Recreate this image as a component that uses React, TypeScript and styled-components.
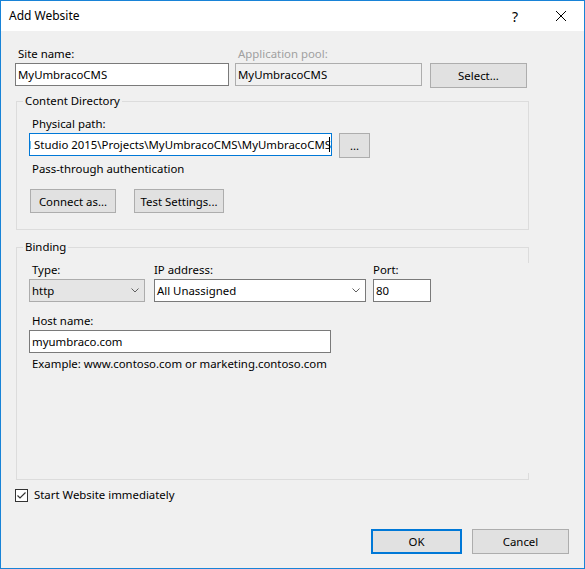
import styled, { createGlobalStyle } from 'styled-components';

const GlobalStyle = createGlobalStyle`
  html, body {
    margin: 0;
    padding: 0;
    background: #ffffff;
  }
`;

const Window = styled.div`
  width: 585px;
  height: 569px;
  box-sizing: border-box;
  border: 1px solid #1883d7;
  display: flex;
  flex-direction: column;
  font-family: 'Noto Sans', 'Open Sans', sans-serif;
  font-size: 11.4px;
  color: #000;
`;

const TitleBar = styled.div`
  height: 30px;
  flex-shrink: 0;
  background: #fff;
  display: flex;
  align-items: center;
`;

const Title = styled.div`
  flex: 1;
  padding-left: 8px;
  line-height: 16px;
  font-size: 12px;
`;

const CaptionButton = styled.div`
  width: 46px;
  height: 30px;
  display: flex;
  align-items: center;
  justify-content: center;
  font-size: 14px;
`;

const Body = styled.div`
  flex: 1;
  background: #f0f0f0;
  padding: 15px 15px 14px 14px;
  display: flex;
  flex-direction: column;
`;

const Label = styled.div<{ $disabled?: boolean; $gap?: number; $flush?: boolean }>`
  height: 16px;
  line-height: 16px;
  padding-left: ${(p) => (p.$flush ? 0 : 3)}px;
  margin-top: ${(p) => p.$gap ?? 0}px;
  margin-bottom: 1px;
  white-space: nowrap;
  color: ${(p) => (p.$disabled ? '#a0a0a0' : '#000')};
`;

const Row = styled.div<{ $gap?: number; $top?: number }>`
  display: flex;
  align-items: flex-start;
  gap: ${(p) => p.$gap ?? 0}px;
  margin-top: ${(p) => p.$top ?? 0}px;
`;

const Column = styled.div<{ $w: number; $left?: number }>`
  width: ${(p) => p.$w}px;
  margin-left: ${(p) => p.$left ?? 0}px;
  display: flex;
  flex-direction: column;
`;

const TextBox = styled.div<{ $w?: number; $disabled?: boolean; $focused?: boolean; $top?: number }>`
  width: ${(p) => (p.$w ? `${p.$w}px` : '100%')};
  height: 23px;
  margin-top: ${(p) => p.$top ?? 0}px;
  box-sizing: border-box;
  border: 1px solid ${(p) => (p.$focused ? '#0078d7' : p.$disabled ? '#adadad' : '#7a7a7a')};
  background: ${(p) => (p.$disabled ? '#f0f0f0' : '#fff')};
  padding: 0 2px;
  line-height: 21px;
  white-space: nowrap;
  overflow: hidden;
`;

const PathBox = styled(TextBox)`
  display: flex;
  justify-content: flex-end;
  align-items: center;
  padding: 0 1px 0 0;
`;

const Caret = styled.span`
  width: 1px;
  height: 15px;
  background: #000;
  margin-left: -2px;
  flex-shrink: 0;
`;

const Button = styled.button<{ $w: number; $h?: number; $default?: boolean; $left?: number }>`
  width: ${(p) => p.$w}px;
  height: ${(p) => p.$h ?? 25}px;
  margin-left: ${(p) => p.$left ?? 0}px;
  box-sizing: border-box;
  background: #e1e1e1;
  border: ${(p) => (p.$default ? '2px solid #0078d7' : '1px solid #adadad')};
  font: inherit;
  color: #000;
  padding: 0;
  flex-shrink: 0;
`;

const Combo = styled.div<{ $readonly?: boolean }>`
  height: 23px;
  box-sizing: border-box;
  border: 1px solid ${(p) => (p.$readonly ? '#acacac' : '#7a7a7a')};
  background: ${(p) => (p.$readonly ? '#e5e5e5' : '#fff')};
  display: flex;
  align-items: center;
  padding: 0 5px 0 2px;
  line-height: 21px;
`;

const ComboValue = styled.span`
  flex: 1;
`;

const Group = styled.section<{ $h: number; $top: number; $openRight?: boolean }>`
  position: relative;
  width: 513px;
  height: ${(p) => p.$h}px;
  box-sizing: border-box;
  margin: ${(p) => p.$top}px 0 0 1px;
  border: 1px solid #dcdcdc;
  border-right-color: ${(p) => (p.$openRight ? 'transparent' : '#dcdcdc')};
  padding: 14px 12px 0 12px;

  ${(p) =>
    p.$openRight &&
    `
    &::before, &::after {
      content: '';
      position: absolute;
      right: -1px;
      width: 1px;
      background: #dcdcdc;
    }
    &::before { top: -1px; height: 16px; }
    &::after { bottom: -1px; height: 7px; }
  `}
`;

const GroupTitle = styled.div`
  position: absolute;
  top: -9px;
  left: 6px;
  padding: 0 2px;
  line-height: 16px;
  background: #f0f0f0;
`;

const CheckRow = styled.label`
  display: flex;
  align-items: center;
  gap: 6px;
  height: 16px;
  margin-top: 7px;
  line-height: 16px;
`;

const CheckBox = styled.span`
  width: 13px;
  height: 13px;
  box-sizing: border-box;
  border: 1px solid #333;
  background: #fff;
  display: flex;
  align-items: center;
  justify-content: center;
`;

const Footer = styled.div`
  margin-top: auto;
  display: flex;
  justify-content: flex-end;
  gap: 10px;
`;

const Chevron = () => (
  <svg width="8" height="5" viewBox="0 0 8 5">
    <path d="M0.5 0.5 L4 4 L7.5 0.5" fill="none" stroke="#606060" strokeWidth="1" />
  </svg>
);

export default function App() {
  return (
    <>
      <GlobalStyle />
      <Window>
        <TitleBar>
          <Title>Add Website</Title>
          <CaptionButton>?</CaptionButton>
          <CaptionButton>
            <svg width="10" height="10" viewBox="0 0 10 10">
              <path d="M0 0 L10 10 M10 0 L0 10" stroke="#000" strokeWidth="1" />
            </svg>
          </CaptionButton>
        </TitleBar>
        <Body>
          <Row>
            <Column $w={214}>
              <Label>Site name:</Label>
              <TextBox>MyUmbracoCMS</TextBox>
            </Column>
            <Column $w={187} $left={6}>
              <Label $disabled>Application pool:</Label>
              <TextBox $disabled>MyUmbracoCMS</TextBox>
            </Column>
            <Column $w={97} $left={8}>
              <Label>&nbsp;</Label>
              <Button $w={97}>Select...</Button>
            </Column>
          </Row>

          <Group $h={129} $top={13}>
            <GroupTitle>Content Directory</GroupTitle>
            <Label>Physical path:</Label>
            <Row $gap={7}>
              <PathBox $w={303} $focused>
                <span>C:\Users\Admin\Documents\Visual Studio 2015\Projects\MyUmbracoCMS\MyUmbracoCMS</span>
                <Caret />
              </PathBox>
              <Button $w={31}>...</Button>
            </Row>
            <Label $gap={3}>Pass-through authentication</Label>
            <Row $top={12}>
              <Button $w={86} $h={24} $left={1}>Connect as...</Button>
              <Button $w={90} $h={24} $left={18}>Test Settings...</Button>
            </Row>
          </Group>

          <Group $h={233} $top={17} $openRight>
            <GroupTitle>Binding</GroupTitle>
            <Row>
              <Column $w={116}>
                <Label>Type:</Label>
                <Combo $readonly>
                  <ComboValue>http</ComboValue>
                  <Chevron />
                </Combo>
              </Column>
              <Column $w={212} $left={9}>
                <Label $flush>IP address:</Label>
                <Combo>
                  <ComboValue>All Unassigned</ComboValue>
                  <Chevron />
                </Combo>
              </Column>
              <Column $w={58} $left={7}>
                <Label $flush>Port:</Label>
                <TextBox>80</TextBox>
              </Column>
            </Row>
            <Label $gap={11}>Host name:</Label>
            <TextBox $w={302} $top={1}>myumbraco.com</TextBox>
            <Label $gap={3}>Example: www.contoso.com or marketing.contoso.com</Label>
          </Group>

          <CheckRow>
            <CheckBox>
              <svg width="11" height="11" viewBox="0 0 11 11">
                <path d="M1.5 5.5 L4 8 L9.5 2.5" fill="none" stroke="#333" strokeWidth="1.2" />
              </svg>
            </CheckBox>
            Start Website immediately
          </CheckRow>

          <Footer>
            <Button $w={91} $default>OK</Button>
            <Button $w={97}>Cancel</Button>
          </Footer>
        </Body>
      </Window>
    </>
  );
}
